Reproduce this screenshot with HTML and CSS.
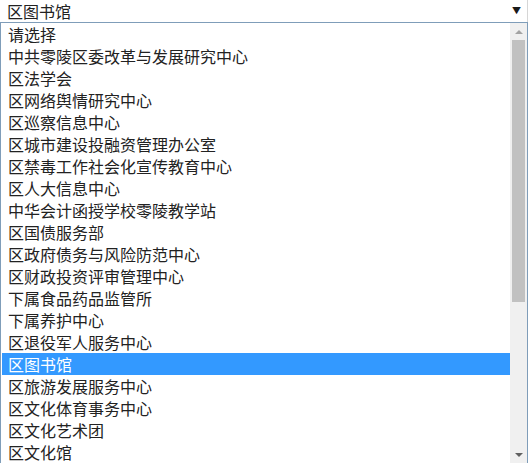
FILE: index.html
```html
<!DOCTYPE html>
<html lang="zh">
<head>
<meta charset="utf-8">
<link rel="stylesheet" href="styles.css">
</head>
<body>
<div class="select">
  <span class="select-value">区图书馆</span>
  <span class="select-arrow">▼</span>
</div>
<div class="listbox">
  <ul class="options">
    <li>请选择</li>
    <li>中共零陵区委改革与发展研究中心</li>
    <li>区法学会</li>
    <li>区网络舆情研究中心</li>
    <li>区巡察信息中心</li>
    <li>区城市建设投融资管理办公室</li>
    <li>区禁毒工作社会化宣传教育中心</li>
    <li>区人大信息中心</li>
    <li>中华会计函授学校零陵教学站</li>
    <li>区国债服务部</li>
    <li>区政府债务与风险防范中心</li>
    <li>区财政投资评审管理中心</li>
    <li>下属食品药品监管所</li>
    <li>下属养护中心</li>
    <li>区退役军人服务中心</li>
    <li class="selected">区图书馆</li>
    <li>区旅游发展服务中心</li>
    <li>区文化体育事务中心</li>
    <li>区文化艺术团</li>
    <li>区文化馆</li>
  </ul>
  <div class="scrollbar">
    <div class="sb-btn sb-up"><span class="tri-up"></span></div>
    <div class="sb-track">
      <div class="sb-thumb"></div>
    </div>
    <div class="sb-btn sb-down"><span class="tri-down"></span></div>
  </div>
</div>
</body>
</html>
```
FILE: styles.css
```css
* { box-sizing: border-box; }
html, body {
  margin: 0;
  padding: 0;
  background: #ffffff;
  width: 529px;
  height: 463px;
  overflow: hidden;
}
body {
  font-family: "Noto Sans CJK SC", "Noto Sans", sans-serif;
  font-size: 16px;
  color: #222222;
}
.select {
  height: 22px;
  width: 528px;
  display: flex;
  align-items: center;
  justify-content: space-between;
  padding: 0 6px 0 7px;
  border-right: 1px solid #d6d6d6;
  background: #fff;
}
.select-value {
  line-height: 20px;
}
.select-arrow {
  font-size: 9px;
  color: #1a1a1a;
  line-height: 10px;
}
.listbox {
  display: flex;
  width: 528px;
  height: 441px;
  border: 1px solid #7f9db9;
  border-bottom: none;
  background: #fff;
}
.options {
  list-style: none;
  margin: 0;
  padding: 0;
  flex: 1;
  overflow: hidden;
}
.options li {
  height: 22px;
  line-height: 22px;
  padding-left: 6px;
  white-space: nowrap;
  margin-left: 1px;
}
.options li.selected {
  background: #3399ff;
  color: #ffffff;
}
.scrollbar {
  width: 17px;
  display: flex;
  flex-direction: column;
  background: #f0f0f0;
}
.sb-btn {
  height: 17px;
  display: flex;
  align-items: center;
  justify-content: center;
}
.tri-up {
  width: 0;
  height: 0;
  border-left: 4px solid transparent;
  border-right: 4px solid transparent;
  border-bottom: 4px solid #a3a3a3;
}
.tri-down {
  width: 0;
  height: 0;
  border-left: 4px solid transparent;
  border-right: 4px solid transparent;
  border-top: 4px solid #606060;
}
.sb-track {
  flex: 1;
  padding: 0 2px;
}
.sb-thumb {
  height: 262px;
  background: #c1c1c1;
}
```
